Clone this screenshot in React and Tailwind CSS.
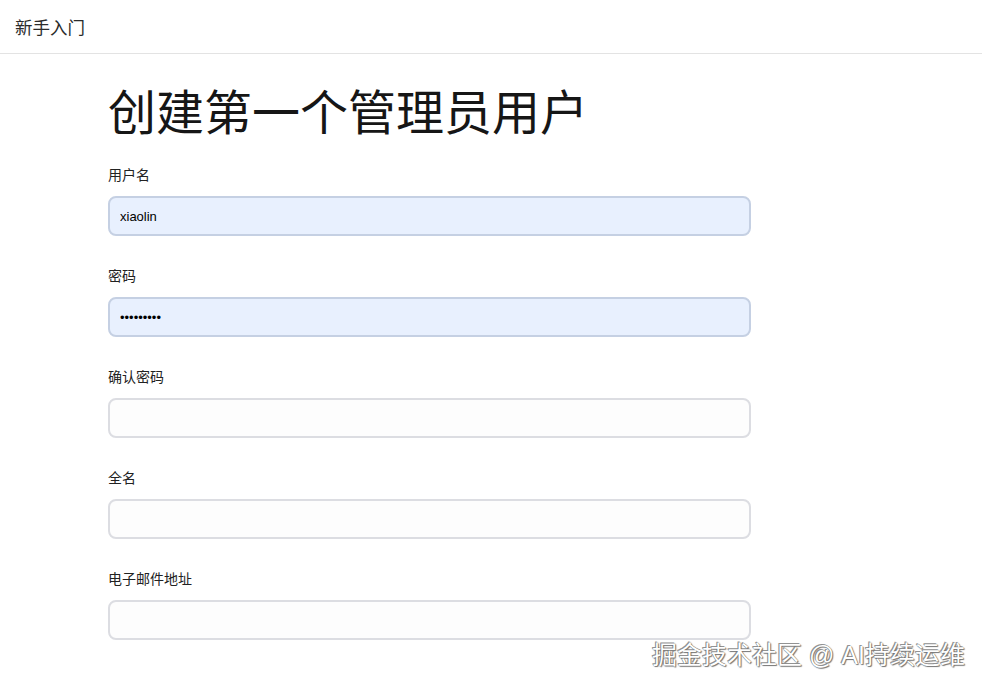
import React from 'react';

const fields = [
  { label: '用户名', value: 'xiaolin', type: 'text', filled: true },
  { label: '密码', value: 'secret123', type: 'password', filled: true },
  { label: '确认密码', value: '', type: 'password', filled: false },
  { label: '全名', value: '', type: 'text', filled: false },
  { label: '电子邮件地址', value: '', type: 'email', filled: false },
];

const font = { fontFamily: '"Liberation Sans", "Noto Sans CJK SC", sans-serif' };

const App = () => {
  return (
    <div className="relative w-[982px] h-[690px] bg-white overflow-hidden" style={font}>
      {/* Header */}
      <div className="h-[54px] flex items-center px-[15px] pt-[3px] border-b border-[#e3e3e3]">
        <span className="text-[17.5px] text-[#2b2b2b]">新手入门</span>
      </div>

      {/* Form */}
      <div className="pl-[108px] w-[751px]">
        <h1 className="text-[48px] leading-none text-[#161616] pt-[36px] pb-[27px] whitespace-nowrap">
          创建第一个管理员用户
        </h1>
        {fields.map((f, i) => (
          <div key={i} className="flex flex-col mb-[30px]">
            <label className="text-[14px] leading-[20px] text-[#222] mb-[11px]">{f.label}</label>
            <input
              type={f.type}
              readOnly
              defaultValue={f.value}
              className={
                f.filled
                  ? 'h-[40px] w-full rounded-[8px] border-2 border-[#c5d0e3] bg-[#e8f0fe] px-[10px] text-[13px] text-black outline-none'
                  : 'h-[40px] w-full rounded-[8px] border-2 border-[#dcdde2] bg-[#fdfdfd] px-[10px] text-[13px] text-black outline-none'
              }
            />
          </div>
        ))}
      </div>

      {/* Watermark */}
      <div
        className="absolute left-[652px] top-[640px] text-[25px] leading-[30px] text-white whitespace-nowrap"
        style={{ textShadow: '0 0 1px #555, 1px 1px 1px #777, -1px -1px 0 #999' }}
      >
        掘金技术社区 @ AI持续运维
      </div>
    </div>
  );
};

export default App;
